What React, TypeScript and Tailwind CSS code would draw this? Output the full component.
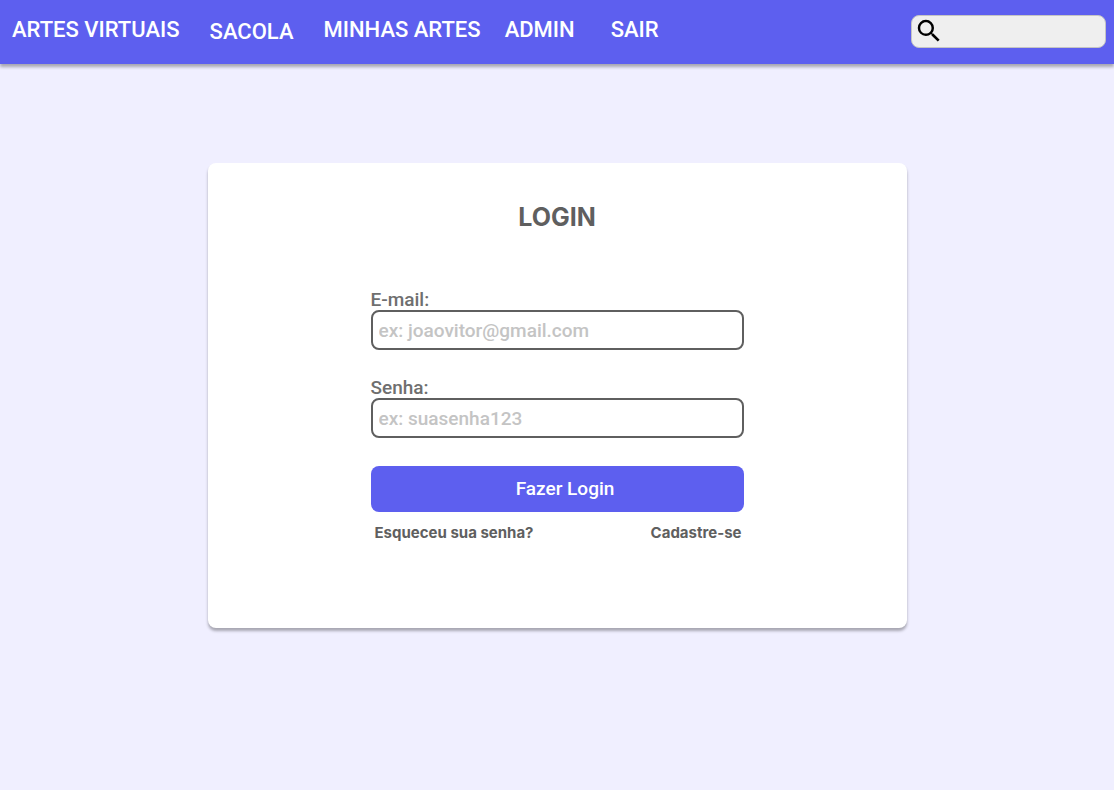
import { useId } from "react";

type NavItem = { label: string; className: string };

const navItems: NavItem[] = [
  { label: "ARTES VIRTUAIS", className: "" },
  { label: "SACOLA", className: "ml-[30px] pt-1" },
  { label: "MINHAS ARTES", className: "ml-[30px]" },
  { label: "ADMIN", className: "ml-6" },
  { label: "SAIR", className: "ml-9" },
];

function Header() {
  return (
    <header className="flex h-16 items-center justify-between bg-[#5d5fef] pr-2 pb-0.5 pl-3 shadow-[0_3px_3px_rgba(0,0,0,0.3)]">
      <nav className="flex items-center pb-0.5 text-[22px] leading-7 font-medium whitespace-nowrap text-white">
        {navItems.map((item) => (
          <a key={item.label} href="#" className={item.className}>
            {item.label}
          </a>
        ))}
      </nav>
      <label className="flex h-[33px] w-[195px] items-center rounded-lg border border-[#c4c4c4] bg-[#efefef] pl-0.5">
        <svg viewBox="0 0 24 24" className="size-[30px] shrink-0" fill="black" aria-hidden="true">
          <path d="M15.5 14h-.79l-.28-.27A6.471 6.471 0 0 0 16 9.5 6.5 6.5 0 1 0 9.5 16c1.61 0 3.09-.59 4.23-1.57l.27.28v.79l5 4.99L20.49 19l-4.99-5zm-6 0C7.01 14 5 11.99 5 9.5S7.01 5 9.5 5 14 7.01 14 9.5 11.99 14 9.5 14z" />
        </svg>
        <input type="search" aria-label="Buscar" className="w-full min-w-0 bg-transparent px-1 text-base outline-none" />
      </label>
    </header>
  );
}

function Field({ label, type, placeholder }: { label: string; type: string; placeholder: string }) {
  const id = useId();
  return (
    <div className="flex flex-col">
      <label htmlFor={id} className="text-[19px] leading-5 font-medium text-[#6f6f6f]">
        {label}
      </label>
      <input
        id={id}
        type={type}
        placeholder={placeholder}
        className="h-10 w-full rounded-lg border-2 border-[#5f5f5f] bg-white px-1.5 text-[19px] font-medium text-[#5f5f5f] outline-none placeholder:text-[#c4c4c4]"
      />
    </div>
  );
}

export default function App() {
  return (
    <div className="min-h-screen bg-[#f0efff] font-['Roboto',sans-serif]">
      <Header />
      <main className="px-4 pt-[99px] pb-10">
        <section className="mx-auto max-w-[699px] rounded-lg bg-white px-6 pt-9 pb-[85px] shadow-[0_3px_3px_rgba(0,0,0,0.3)]">
          <h1 className="text-center font-['Inter',sans-serif] text-[25px] leading-9 font-bold text-[#5f5f5f]">LOGIN</h1>
          <form className="mx-auto mt-[55px] max-w-[373px]" onSubmit={(e) => e.preventDefault()}>
            <div className="flex flex-col gap-7">
              <Field label="E-mail:" type="email" placeholder="ex: joaovitor@gmail.com" />
              <Field label="Senha:" type="password" placeholder="ex: suasenha123" />
            </div>
            <button type="submit" className="mt-7 h-[46px] w-full rounded-lg bg-[#5d5fef] pl-4 text-[19px] font-medium text-white">
              Fazer Login
            </button>
            <div className="mt-[11px] flex justify-between pr-0.5 pl-1 font-['Inter',sans-serif] text-[15px] leading-5 font-bold text-[#5f5f5f]">
              <a href="#">Esqueceu sua senha?</a>
              <a href="#">Cadastre-se</a>
            </div>
          </form>
        </section>
      </main>
    </div>
  );
}
